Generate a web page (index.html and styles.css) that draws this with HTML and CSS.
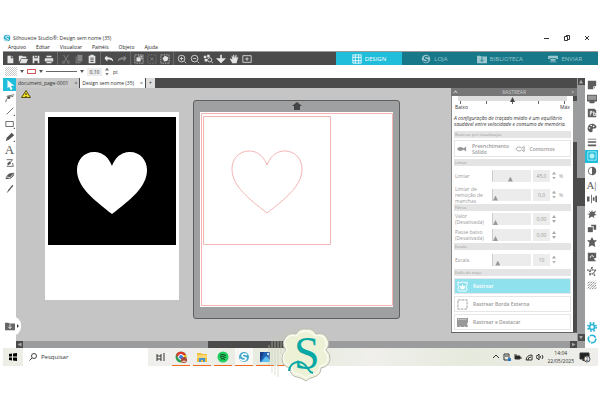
FILE: index.html
```html
<!DOCTYPE html>
<html lang="pt-br">
<head>
    <meta charset="UTF-8">
    <meta name="viewport" content="width=device-width, initial-scale=1.0">
    <title>Silhouette Studio</title>
    <link rel="stylesheet" href="styles.css">
</head>
<body>
    <svg class="sprite" aria-hidden="true">
        <symbol id="i-new" viewBox="0 0 12 12"><path d="M3 2h4v3h3v6H3zM8 2l2 2H8z"/></symbol>
        <symbol id="i-open" viewBox="0 0 12 12"><path d="M1 10V2h4l1 1h4v2H4z"/><path d="M4 6h8l-2 5H2z"/></symbol>
        <symbol id="i-save" viewBox="0 0 12 12"><path d="M2 2h2v3h4V2h2v9H8V8H4v3H2zM5 2h2v2H5zM4 6h4v1H4z"/></symbol>
        <symbol id="i-print" viewBox="0 0 12 12"><path d="M3 2h6v2H3zM1 5h10v4H9V8H3v1H1zM3 9h6v2H3z"/></symbol>
        <symbol id="i-cut" viewBox="0 0 12 12"><path d="M3 1l5 8M9 1L4 9" fill="none" stroke="currentColor"/><circle cx="3" cy="10" r="1.3" fill="none" stroke="currentColor"/><circle cx="9" cy="10" r="1.3" fill="none" stroke="currentColor"/></symbol>
        <symbol id="i-copy" viewBox="0 0 12 12"><path d="M4 1h6v8H4z"/><path d="M2 3h1v7h5v1H2z"/></symbol>
        <symbol id="i-paste" viewBox="0 0 12 12"><path d="M2 2h2V1h4v1h2v9H2z"/><path d="M4 5h4M4 7h4M4 9h4" stroke="#4a4b4a"/></symbol>
        <symbol id="i-undo" viewBox="0 0 12 12"><path d="M1 4l3-2v2c4 0 7 1 7 5-2-2-4-3-7-2v2L1 6z"/></symbol>
        <symbol id="i-redo" viewBox="0 0 12 12"><path d="M11 4L8 2v2c-4 0-7 1-7 5 2-2 4-3 7-2v2l3-3z"/></symbol>
        <symbol id="i-selall" viewBox="0 0 12 12"><path d="M1 1h10v10H1z" fill="none" stroke="currentColor" stroke-dasharray="1 1"/><path d="M5 2h5v5H9V3H5z"/><path d="M3 4h5v5H3z"/></symbol>
        <symbol id="i-desel" viewBox="0 0 12 12"><path d="M1 1h10v10H1z" fill="none" stroke="currentColor" stroke-dasharray="1 1"/><path d="M4 4l4 4M8 4L4 8" stroke="currentColor"/></symbol>
        <symbol id="i-selcol" viewBox="0 0 12 12"><path d="M1 1h10v10H1z" fill="none" stroke="currentColor" stroke-dasharray="1 1"/><path d="M6 2l4 2-1 4-4 1-2-4z"/></symbol>
        <symbol id="i-zin" viewBox="0 0 12 12"><circle cx="5.5" cy="5.5" r="4" fill="none" stroke="currentColor"/><path d="M9 9l2 2M3.500 5.500h4M5.500 3.500v4" stroke="currentColor"/></symbol>
        <symbol id="i-zout" viewBox="0 0 12 12"><circle cx="5.500" cy="5.500" r="4" fill="none" stroke="currentColor"/><path d="M9 9l2 2M3.500 5.500h4" stroke="currentColor"/></symbol>
        <symbol id="i-zsel" viewBox="0 0 12 12"><path d="M1 2h3v3H1zM5 1h3v3H5zM2 6h3v3H2z"/><circle cx="8" cy="7" r="2.500" fill="none" stroke="currentColor"/><path d="M10 9l2 2" stroke="currentColor"/></symbol>
        <symbol id="i-zfit" viewBox="0 0 12 12"><path d="M5 1h2v4h5L6 11 0 5h5z"/></symbol>
        <symbol id="i-hand" viewBox="0 0 12 12"><path d="M4 11L1 6l1-1 2 2-1-5h1l1 3V1h1l1 4 1-4h1v4l2-2v1L9 11z"/></symbol>
        <symbol id="i-page" viewBox="0 0 12 12"><path d="M1 2h10v8H1zM6 4v4M4 6h4" fill="none" stroke="currentColor"/></symbol>
        <symbol id="i-grid" viewBox="0 0 12 12"><path d="M1 1h10v10H1zM1 4h10M1 8h10M4 1v10M8 1v10" fill="none" stroke="currentColor"/></symbol>
        <symbol id="i-sil" viewBox="0 0 12 12"><circle cx="6" cy="6" r="5"/><path d="M9 4C7 2 4 3 4 5s5 1 4 3-4 2-6 0" fill="none" stroke="var(--hole, #17788a)" stroke-width="1.500"/></symbol>
        <symbol id="i-lib" viewBox="0 0 12 12"><path d="M0 2h4l1 1h7v8H0z"/><path d="M6 4v5M4 7l2 2 2-2" fill="none" stroke="var(--hole, #17788a)"/></symbol>
        <symbol id="i-send" viewBox="0 0 12 12"><path d="M0 3l1-1h10l1 1v3h-2V5H2v1H0zM3 6h6v2H3zM2 9h8v1H2z"/></symbol>
        <symbol id="i-arrow" viewBox="0 0 12 12"><path d="M3 0l8 7H7l2 4-2 1-2-4-2 2z"/></symbol>
        <symbol id="i-node" viewBox="0 0 12 12"><path d="M1 11c0-5 3-6 9-7M2 4l9-2" fill="none" stroke="currentColor"/><path d="M3 4h3v3H3z"/></symbol>
        <symbol id="i-line" viewBox="0 0 12 12"><path d="M2 10l8-8" stroke="currentColor"/><path d="M12 10v2h-2z"/></symbol>
        <symbol id="i-rect" viewBox="0 0 12 12"><path d="M1 3h9v6H1z" fill="none" stroke="currentColor"/><path d="M12 10v2h-2z"/></symbol>
        <symbol id="i-pen" viewBox="0 0 12 12"><path d="M1 11l1-4 6-6 3 3-6 5z"/><path d="M12 10v2h-2z"/></symbol>
        <symbol id="i-sketch" viewBox="0 0 12 12"><path d="M2 2h7M2 10h8L9 6M4 8l5-6" fill="none" stroke="currentColor"/><path d="M3 6l3-2 1 3-4 2z"/></symbol>
        <symbol id="i-eraser" viewBox="0 0 12 12"><path d="M5 3l6-1v3L7 9l-6 1V7z"/><path d="M1 7l5 1 5-5" fill="none" stroke="#fff"/></symbol>
        <symbol id="i-knife" viewBox="0 0 12 12"><path d="M2 11l2-4 5-6 1 1-5 6z"/></symbol>
        <symbol id="i-note" viewBox="0 0 12 12"><path d="M1 1h10v6L8 11H1z"/><path d="M8 11V8h3" fill="none" stroke="#fff"/></symbol>
        <symbol id="i-mat" viewBox="0 0 12 12"><path d="M0 1h12v8H9v2H3V9H0z"/><path d="M1 2h10v5H1z" fill="#999"/></symbol>
        <symbol id="i-pix" viewBox="0 0 12 12"><path d="M1 1h8l2 2v8H1z"/><path d="M4 9V4h2v2H4M8 4v5h2V6H8" fill="none" stroke="#fff"/></symbol>
        <symbol id="i-palette" viewBox="0 0 12 12"><path d="M6 1c4 0 6 3 5 5-1 1-3 0-4 1s1 4-2 4C2 11 0 8 1 5s3-4 5-4z"/><g fill="#fff"><circle cx="3" cy="6" r="1"/><circle cx="5" cy="3" r="1"/><circle cx="8" cy="4" r="1"/></g></symbol>
        <symbol id="i-lines" viewBox="0 0 12 12"><path d="M1 2h10v1H1zM1 5h10v2H1zM1 9h10v2H1z"/></symbol>
        <symbol id="i-trace" viewBox="0 0 12 12"><path d="M1 1h10v10H1z" fill="none" stroke="currentColor"/><circle cx="6" cy="6" r="3"/></symbol>
        <symbol id="i-contrast" viewBox="0 0 12 12"><circle cx="6" cy="6" r="4.500" fill="none" stroke="currentColor"/><path d="M6 1a5 5 0 0 1 0 10z"/></symbol>
        <symbol id="i-align" viewBox="0 0 12 12"><path d="M0 3h3v6H0zM5 1h1v10H5zM7 4h2v4H7zM10 2h2v8h-2z"/></symbol>
        <symbol id="i-burst" viewBox="0 0 12 12"><path d="M2 2l3 2 1-3 1 3 4-2-2 4 3 1-4 1 1 3-3-2-4 2 1-4-3-1 4-1z"/></symbol>
        <symbol id="i-rep" viewBox="0 0 12 12"><path d="M1 5h6v6H1z"/><path d="M5 2h6v6H8V4H5z"/></symbol>
        <symbol id="i-star" viewBox="0 0 12 12"><path d="M6 0l2 4 4 0-3 3 1 5-4-2-4 2 1-5-3-3h4z"/></symbol>
        <symbol id="i-nest" viewBox="0 0 12 12"><path d="M1 1h10v6L8 8l3 3H1z"/><path d="M4 7a2 2 0 1 1 4-1" fill="none" stroke="#fff"/></symbol>
        <symbol id="i-dotstar" viewBox="0 0 12 12"><path d="M6 1l1 4h4L8 7l1 4-3-2-3 2 1-4-3-2h4z" fill="none" stroke="currentColor" stroke-width="1.500" stroke-dasharray="2 1"/></symbol>
        <symbol id="i-hatch" viewBox="0 0 12 12"><path d="M1 4l3-3M1 7l6-6M1 10l9-9M3 11l8-8M6 11l5-5M9 11l2-2" stroke="currentColor" stroke-dasharray="3 1"/></symbol>
        <symbol id="i-gear" viewBox="0 0 12 12"><circle cx="6" cy="6" r="3" fill="none" stroke="currentColor" stroke-width="2"/><circle cx="6" cy="6" r="5" fill="none" stroke="currentColor" stroke-width="2" stroke-dasharray="2 2"/></symbol>
        <symbol id="i-sync" viewBox="0 0 12 12"><circle cx="6" cy="6" r="4.500" fill="none" stroke="currentColor" stroke-width="2" stroke-dasharray="8 1"/></symbol>
        <symbol id="i-fish" viewBox="0 0 12 12"><path d="M0 6c2-3 5-3 8-1l3-2v6L8 7c-3 2-6 2-8-1z"/></symbol>
        <symbol id="i-fishline" viewBox="0 0 12 12"><path d="M1 6c2-3 5-3 7-1l3-2v6L8 7c-2 2-5 2-7-1z" fill="none" stroke="currentColor"/></symbol>
        <symbol id="i-badge" viewBox="0 0 12 12"><path d="M1 1l2 1 3-1 3 1 2-1v3l-1 2 1 3-1 2H2L1 9l1-3-1-2z" fill="none" stroke="currentColor" stroke-width="1"/><path d="M3 5l2 1 1-3 1 3 2-1-1 4H4z"/></symbol>
        <symbol id="i-dashbox" viewBox="0 0 12 12"><path d="M1 1h10v10H1z" fill="none" stroke="currentColor" stroke-dasharray="3 1"/></symbol>
        <symbol id="i-detach" viewBox="0 0 12 12"><path d="M0 1h12v5l-1 1 1 4H9v-1H8v1H4v-1H3v1H0z"/><path d="M1 2.500h10" stroke="#fff" stroke-dasharray="1 1"/></symbol>
    </svg>

    <div class="app">
        <header class="titlebar">
            <svg class="icon title-logo"><use href="#i-sil"/></svg>
            <span class="title-text">Silhouette Studio®: Design sem nome (35)</span>
            <div class="window-buttons">
                <button aria-label="Minimizar"><svg viewBox="0 0 6 6"><path d="M0 3.500h5"/></svg></button>
                <button aria-label="Restaurar"><svg viewBox="0 0 6 6"><path d="M.5 1.500h3v4h-3zM2 .5h3.500v4H4"/></svg></button>
                <button aria-label="Fechar"><svg viewBox="0 0 6 6"><path d="M1 1l4 4M5 1L1 5"/></svg></button>
            </div>
        </header>

        <nav class="menubar">
            <button>Arquivo</button>
            <button>Editar</button>
            <button>Visualizar</button>
            <button>Painéis</button>
            <button>Objeto</button>
            <button>Ajuda</button>
        </nav>

        <div class="toolbar">
            <div class="tool-group">
                <button aria-label="Novo"><svg class="icon"><use href="#i-new"/></svg></button>
                <button aria-label="Abrir"><svg class="icon"><use href="#i-open"/></svg></button>
                <button aria-label="Salvar"><svg class="icon"><use href="#i-save"/></svg></button>
                <button aria-label="Imprimir"><svg class="icon"><use href="#i-print"/></svg></button>
            </div>
            <div class="tool-group">
                <button class="off" aria-label="Cortar"><svg class="icon"><use href="#i-cut"/></svg></button>
                <button class="off" aria-label="Copiar"><svg class="icon"><use href="#i-copy"/></svg></button>
                <button aria-label="Colar"><svg class="icon"><use href="#i-paste"/></svg></button>
            </div>
            <div class="tool-group">
                <button aria-label="Desfazer"><svg class="icon"><use href="#i-undo"/></svg></button>
                <button class="off" aria-label="Refazer"><svg class="icon"><use href="#i-redo"/></svg></button>
            </div>
            <div class="tool-group">
                <button aria-label="Selecionar tudo"><svg class="icon"><use href="#i-selall"/></svg></button>
                <button class="off" aria-label="Desmarcar"><svg class="icon"><use href="#i-desel"/></svg></button>
                <button aria-label="Selecionar por cor"><svg class="icon"><use href="#i-selcol"/></svg></button>
            </div>
            <div class="tool-group">
                <button aria-label="Aproximar"><svg class="icon"><use href="#i-zin"/></svg></button>
                <button aria-label="Afastar"><svg class="icon"><use href="#i-zout"/></svg></button>
                <button aria-label="Zoom na seleção"><svg class="icon"><use href="#i-zsel"/></svg></button>
                <button aria-label="Arrastar zoom"><svg class="icon"><use href="#i-zfit"/></svg></button>
                <button aria-label="Mover"><svg class="icon"><use href="#i-hand"/></svg></button>
                <button aria-label="Ajustar à página"><svg class="icon"><use href="#i-page"/></svg></button>
            </div>
            <nav class="modes">
                <a href="#design" class="active"><svg class="icon"><use href="#i-grid"/></svg>DESIGN</a>
                <a href="#loja"><svg class="icon"><use href="#i-sil"/></svg>LOJA</a>
                <a href="#biblioteca"><svg class="icon"><use href="#i-lib"/></svg>BIBLIOTECA</a>
                <a href="#enviar"><svg class="icon"><use href="#i-send"/></svg>ENVIAR</a>
            </nav>
        </div>

        <div class="options">
            <label class="drop"><span class="swatch pattern"></span><select aria-label="Preenchimento"></select></label>
            <label class="drop"><span class="swatch stroke"></span><select aria-label="Cor da linha"></select></label>
            <label class="drop"><span class="swatch rule"></span><select aria-label="Estilo da linha"></select></label>
            <input class="num" type="text" value="0,10" aria-label="Espessura">
            <span class="spin"><button aria-label="Mais"></button><button aria-label="Menos"></button></span>
            <span>pt</span>
        </div>

        <main class="main">
            <div class="tools">
                <button class="active" aria-label="Selecionar"><svg class="icon"><use href="#i-arrow"/></svg></button>
                <button aria-label="Editar pontos"><svg class="icon"><use href="#i-node"/></svg></button>
                <button aria-label="Linha"><svg class="icon"><use href="#i-line"/></svg></button>
                <button aria-label="Retângulo"><svg class="icon"><use href="#i-rect"/></svg></button>
                <button aria-label="Desenho"><svg class="icon"><use href="#i-pen"/></svg></button>
                <button class="letter" aria-label="Texto">A</button>
                <button aria-label="Esboço"><svg class="icon"><use href="#i-sketch"/></svg></button>
                <button aria-label="Borracha"><svg class="icon"><use href="#i-eraser"/></svg></button>
                <button aria-label="Faca"><svg class="icon"><use href="#i-knife"/></svg></button>
                <button class="library" aria-label="Biblioteca"><svg class="icon"><use href="#i-lib"/></svg><i></i></button>
            </div>

            <div class="workspace">
                <div class="tabs">
                    <button class="tab">document_page-0001<span>×</span></button>
                    <button class="tab current">Design sem nome (35)<span>×</span></button>
                    <button class="tab add" aria-label="Nova aba">+</button>
                </div>

                <div class="stage">
                    <svg class="warning" viewBox="0 0 10 8"><path d="M5 .5L9.500 7.500H.5z" fill="#f4e21c" stroke="#55501a"/><path d="M5 3v2M5 6v1" stroke="#222"/></svg>
                    <div class="picture">
                        <svg viewBox="0 0 128 128"><path fill="#000" d="M0 0h128v128H0z"/><path fill="#fff" d="M64 49C59 36 50 35 46 35C36 35 29 43 29 53C29 70 46 83 64 97C82 83 99 70 99 53C99 43 92 35 82 35C78 35 69 36 64 49z"/></svg>
                    </div>
                    <div class="mat">
                        <svg class="mat-arrow" viewBox="0 0 10 8"><path d="M5 0l5 4H8v4H2V4H0z"/></svg>
                        <svg class="page" viewBox="0 0 193 195">
                            <path d="M1.500 1.500h191v192h-191z"/>
                            <path d="M3.500 4.500h127v128h-127z"/>
                            <path d="M67 53C62 40 53 39 49 39C39 39 32 47 32 57C32 74 49 87 67 101C85 87 102 74 102 57C102 47 95 39 85 39C81 39 72 40 67 53z"/>
                        </svg>
                    </div>

                    <aside class="panel">
                        <header><span class="chevron"></span><span>RASTREAR</span><button aria-label="Fechar">×</button></header>
                        <div class="panel-view">
                            <div class="panel-body">
                                <div class="quality">
                                    <input type="range" min="0" max="4" value="2" aria-label="Qualidade do traçado">
                                    <div class="ticks"><i></i><i></i><i></i><i></i><i></i></div>
                                    <div class="ends"><span>Baixo</span><span>Máx</span></div>
                                    <p>A configuração de traçado médio é um equilíbrio saudável entre velocidade e consumo de memória.</p>
                                </div>

                                <h2>Rastrear pré-visualização</h2>
                                <div class="preview">
                                    <button><svg class="icon"><use href="#i-fish"/></svg>Preenchimento Sólido</button>
                                    <button><svg class="icon"><use href="#i-fishline"/></svg>Contornos</button>
                                </div>

                                <h2>Limiar</h2>
                                <div class="fields">
                                    <div class="field">
                                        <label for="limiar">Limiar</label>
                                        <input type="range" id="limiar" value="45">
                                        <input class="num" type="text" value="45,0" aria-label="Limiar, valor">
                                        <span class="spin"><button aria-label="Mais"></button><button aria-label="Menos"></button></span>%
                                    </div>
                                    <div class="field">
                                        <label for="manchas">Limiar de remoção de manchas</label>
                                        <input type="range" id="manchas" value="0">
                                        <input class="num" type="text" value="0,0" aria-label="Manchas, valor">
                                        <span class="spin"><button aria-label="Mais"></button><button aria-label="Menos"></button></span>%
                                    </div>
                                </div>

                                <h2>Filtros</h2>
                                <div class="fields tight">
                                    <div class="field">
                                        <label for="valor">Valor (Desativada)</label>
                                        <input type="range" id="valor" value="0">
                                        <input class="num" type="text" value="0,00" aria-label="Passe alto, valor">
                                        <span class="spin"><button aria-label="Mais"></button><button aria-label="Menos"></button></span>
                                    </div>
                                    <div class="field">
                                        <label for="passe">Passe baixo (Desativada)</label>
                                        <input type="range" id="passe" value="0">
                                        <input class="num" type="text" value="0,00" aria-label="Passe baixo, valor">
                                        <span class="spin"><button aria-label="Mais"></button><button aria-label="Menos"></button></span>
                                    </div>
                                </div>

                                <h2>Escala</h2>
                                <div class="fields">
                                    <div class="field">
                                        <label for="escala">Escala</label>
                                        <input type="range" id="escala" value="7">
                                        <input class="num" type="text" value="10" aria-label="Escala, valor">
                                        <span class="spin"><button aria-label="Mais"></button><button aria-label="Menos"></button></span>
                                    </div>
                                </div>

                                <h2>Estilo de traço</h2>
                                <div class="styles">
                                    <button class="active"><svg class="icon"><use href="#i-badge"/></svg>Rastrear</button>
                                    <button><svg class="icon"><use href="#i-dashbox"/></svg>Rastrear Borda Externa</button>
                                    <button><svg class="icon"><use href="#i-detach"/></svg>Rastrear e Destacar</button>
                                </div>
                            </div>
                            <div class="panel-scroll"><i class="up"></i><b></b><i class="down"></i></div>
                        </div>
                    </aside>
                </div>

                <div class="vscroll"><i class="up"></i><b></b><i class="down"></i></div>
                <div class="hscroll"><i class="left"></i><b></b><i class="right"></i></div>
            </div>

            <div class="panels">
                <div class="panel-icons">
                    <button aria-label="Página"><svg class="icon"><use href="#i-note"/></svg></button>
                    <button aria-label="Base"><svg class="icon"><use href="#i-mat"/></svg></button>
                    <button aria-label="PixScan"><svg class="icon"><use href="#i-pix"/></svg></button>
                    <button aria-label="Cores"><svg class="icon"><use href="#i-palette"/></svg></button>
                    <button aria-label="Linhas"><svg class="icon"><use href="#i-lines"/></svg></button>
                    <button class="active" aria-label="Rastrear"><svg class="icon"><use href="#i-trace"/></svg></button>
                    <button aria-label="Imagem"><svg class="icon"><use href="#i-contrast"/></svg></button>
                    <button class="letter" aria-label="Estilo de texto">A|</button>
                    <button aria-label="Alinhar"><svg class="icon"><use href="#i-align"/></svg></button>
                    <button aria-label="Transformar"><svg class="icon"><use href="#i-burst"/></svg></button>
                    <button aria-label="Replicar"><svg class="icon"><use href="#i-rep"/></svg></button>
                    <button aria-label="Modificar"><svg class="icon"><use href="#i-star"/></svg></button>
                    <button aria-label="Aninhar"><svg class="icon"><use href="#i-nest"/></svg></button>
                    <button aria-label="Strass"><svg class="icon"><use href="#i-dotstar"/></svg></button>
                    <button aria-label="Esboço"><svg class="icon"><use href="#i-hatch"/></svg></button>
                </div>
                <div class="panel-icons blue">
                    <button aria-label="Preferências"><svg class="icon"><use href="#i-gear"/></svg></button>
                    <button aria-label="Atualizar"><svg class="icon"><use href="#i-sync"/></svg></button>
                </div>
            </div>
        </main>

        <footer class="taskbar">
            <button class="start" aria-label="Iniciar"><svg viewBox="0 0 8 8"><path d="M0 1l3-.5v3H0zM4 .5L8 0v3.500H4zM0 4.500h3v3L0 7zM4 4.500h4V8l-4-.5z"/></svg></button>
            <label class="search"><svg viewBox="0 0 8 8"><circle cx="5" cy="3" r="2.500"/><path d="M3 5L.5 7.500"/></svg><input type="text" placeholder="Pesquisar" aria-label="Pesquisar"></label>
            <div class="apps">
                <button class="view" aria-label="Visão de tarefas"><svg viewBox="0 0 12 12"><path d="M3 3v2h4V3M3 10V8h4v2M3 5v3M7 5v3M10 2v8" fill="none" stroke="#333"/></svg></button>
                <button aria-label="Chrome"><svg viewBox="0 0 12 12"><circle cx="6" cy="6" r="5.500" fill="#34a04b"/><path d="M1 4a5.500 5.500 0 0 1 10 0H6L4 7z" fill="#e0392b"/><path d="M11 4a5.500 5.500 0 0 1-5 7.500L8 6 7 4z" fill="#f5c11e"/><circle cx="6" cy="6" r="2.500" fill="#3b7de0" stroke="#fff"/><circle cx="9" cy="9" r="3" fill="#a5483f"/><path d="M7 11c0-2 4-2 4 0z" fill="#e9c2ae"/></svg></button>
                <button aria-label="Arquivos"><svg viewBox="0 0 12 12"><path d="M1 2h4l1 1h5v8H1z" fill="#f3bd3c"/><path d="M1 4h10v3H1z" fill="#fbd875"/><path d="M3 7h6v4H7V9H5v2H3z" fill="#4794cf"/></svg></button>
                <button aria-label="Spotify"><svg viewBox="0 0 12 12"><circle cx="6" cy="6" r="5.500" fill="#1fce5d"/><path d="M3 4q3-1 6 .5M3 6q3-1 5.500.5M4 8q2-1 4 .5" fill="none" stroke="#143c20"/></svg></button>
                <button class="running" aria-label="Silhouette Studio"><svg class="sil" viewBox="0 0 12 12"><use href="#i-sil"/></svg></button>
                <button aria-label="Fotos"><svg viewBox="0 0 12 12"><path d="M1 1h10v10H1z" fill="#1c63b7"/><path d="M2 11l5-6 4 4v2z" fill="#5cc1f0"/><path d="M1 1h4L2 9H1z" fill="#163f86"/><circle cx="9" cy="3" r="1" fill="#fff"/></svg></button>
                <button aria-label="Outro aplicativo"></button>
            </div>
            <div class="tray">
                <svg viewBox="0 0 8 8"><path d="M1 5l3-3 3 3"/></svg>
                <svg viewBox="0 0 8 8"><path d="M1 1h5v6H1zM2 3h3"/><path d="M5 5h3v3H5z" fill="#2a7cc8" stroke="none"/></svg>
                <svg viewBox="0 0 8 8"><path d="M1 3h5v3H1z" fill="#222"/><path d="M7 4v2M0 2h3"/></svg>
                <svg viewBox="0 0 8 8"><path d="M1 7a6 6 0 0 1 6-5v5zM3 7a3 3 0 0 1 3-3"/></svg>
                <svg viewBox="0 0 8 8"><path d="M0 3h1l2-2v6L1 5H0zM4 3q1 1 0 2M6 2q2 2 0 4"/></svg>
                <time>14:04<br>22/05/2025</time>
                <svg class="notes" viewBox="0 0 12 12"><path d="M1 2h9v6H6L4 10V8H1z" fill="#222"/><circle cx="8" cy="8" r="3" fill="#eee" stroke="#555"/><text x="6.500" y="10">2</text></svg>
            </div>

            <svg class="brand" viewBox="0 0 64 60">
                <path class="stripes" d="M1 20v20M4 14v34M7 12v38M10 10v42M13 9v20M16 7v18M19 4v14M22 2v10M25 3v6"/>
                <path class="flower" d="M38 4q7-1 10 5q8-2 11 4q4 6-1 12q5 4 4 10q-2 7-9 8q0 7-7 9q-5 1-8 4q-4-3-9-4q-7-1-7-9q-8-2-8-9q0-5 4-9q-5-6-1-12q4-6 11-4q3-6 10-5z"/>
                <path class="flower-line" d="M38 6q5 0 9 5q7-2 10 3q3 6-1 11q4 5 4 9q-2 6-8 7q-1 7-7 8q-5 1-7 4q-4-3-8-4q-6-1-7-8q-7-1-8-8q0-4 4-8q-4-6-1-11q4-5 10-3q4-5 10-5z"/>
                <text x="26" y="44">S</text>
                <path class="swash" d="M21 46c1-9 10-11 15-7c5 4 4 8 9 9"/>
            </svg>
        </footer>
    </div>
</body>
</html>
```

FILE: styles.css
```css
* {
    box-sizing: border-box;
}

body {
    margin: 0;
    padding: 32px 3px;
    background: white;
    color: #333;
    font-family: "Open Sans", "Noto Sans", sans-serif;
    font-size: 5px;
    line-height: 6px;
}

button, input, select {
    margin: 0;
    padding: 0;
    border: none;
    background: none;
    color: inherit;
    font: inherit;
}

button {
    display: flex;
    align-items: center;
    justify-content: center;
}

svg {
    display: block;
    flex: none;
}

.sprite {
    position: absolute;
    width: 0;
    height: 0;
}

.icon {
    width: 10px;
    height: 10px;
    fill: currentColor;
}

/* title and menu */
.titlebar {
    display: flex;
    align-items: center;
    gap: 2px;
    height: 11px;
}

.title-logo {
    width: 8px;
    height: 8px;
    color: #27a9c7;
    --hole: #fff;
}

.window-buttons {
    display: flex;
    gap: 14px;
    margin-left: auto;
    padding-right: 8px;
}

.window-buttons svg {
    width: 6px;
    height: 6px;
    fill: none;
    stroke: #333;
}

.menubar {
    display: flex;
    gap: 10px;
    height: 8px;
    padding-left: 5px;
    color: #222;
}

/* toolbar */
.toolbar {
    display: flex;
    height: 14px;
    border-top: 1px solid #999;
    background: #4a4b4a;
    color: #e4e4e4;
}

.tool-group {
    display: flex;
    align-items: center;
}

.tool-group + .tool-group {
    margin-left: 2px;
    padding-left: 1px;
    border-left: 1px solid #6a6b6a;
}

.tool-group button {
    width: 13px;
    height: 13px;
}

.tool-group .off {
    color: #858685;
}

.modes {
    display: flex;
    flex: 0 0 44%;
    margin-left: auto;
}

.modes a {
    display: flex;
    flex: 1;
    align-items: center;
    justify-content: center;
    gap: 3px;
    background: #17788a;
    color: #9cc6cd;
    font-size: 6px;
    text-decoration: none;
}

.modes .active {
    background: #20bedb;
    color: white;
}

/* line options */
.options {
    display: flex;
    align-items: center;
    gap: 3px;
    height: 13px;
    padding-left: 2px;
}

.drop {
    display: flex;
    align-items: center;
    gap: 3px;
}

.drop select {
    width: 4px;
    height: 3px;
    appearance: none;
    background: #555;
    clip-path: polygon(0 0, 100% 0, 50% 100%);
}

.swatch {
    width: 12px;
    height: 9px;
}

.pattern {
    background: repeating-conic-gradient(#ccc 0 25%, #fff 0 50%) 0 0 / 2px 2px;
}

.stroke {
    width: 9px;
    height: 5px;
    border: 1px solid #cf5a5a;
}

.rule {
    width: 31px;
    height: 1px;
    background: #666;
}

.num {
    width: 15px;
    height: 8px;
    background: #ededed;
    text-align: center;
}

.spin {
    display: flex;
    flex-direction: column;
    gap: 2px;
    width: 5px;
}

.spin button {
    width: 4px;
    height: 3px;
    background: #777;
    clip-path: polygon(50% 0, 100% 100%, 0 100%);
}

.spin button + button {
    clip-path: polygon(0 0, 100% 0, 50% 100%);
}

/* main area */
.main {
    display: flex;
}

.tools {
    display: flex;
    flex-direction: column;
    width: 13px;
    color: #555;
}

.tools button {
    width: 13px;
    height: 13px;
}

.tools .active {
    background: #20bedb;
    color: white;
}

.tools .letter {
    font: 13px "Liberation Serif", serif;
}

.tools .library {
    z-index: 1;
    gap: 2px;
    width: 18px;
    height: 20px;
    margin: auto 0 12px;
    border-radius: 0 9px 9px 0;
    background: white;
    color: #666;
    --hole: #fff;
}

.library i {
    width: 2px;
    height: 4px;
    background: #444;
    clip-path: polygon(0 0, 100% 50%, 0 100%);
}

.workspace {
    display: grid;
    flex: 1;
    grid-template-columns: 1fr 8px;
    grid-template-rows: 10px auto 7px;
    min-width: 0;
    background: #9b9c9d;
}

.tabs {
    display: flex;
    gap: 1px;
    background: #4a4b4a;
}

.tab {
    gap: 6px;
    padding: 0 2px;
    background: #c9c9c9;
}

.tab.current {
    background: white;
}

.tab.add {
    padding: 0 3px;
    background: #ddd;
}

.stage {
    position: relative;
    display: flex;
    align-items: flex-start;
    padding-left: 29px;
    background: #c5c5c5;
    overflow: hidden;
}

.warning {
    position: absolute;
    top: 2px;
    left: 5px;
    width: 10px;
    height: 8px;
}

.picture {
    flex: none;
    margin-top: 24px;
    padding: 5px 3px 55px;
    background: white;
}

.picture svg {
    width: 128px;
    height: 128px;
}

.mat {
    flex: none;
    margin: 12px 0 0 14px;
    padding: 1px 6px 11px;
    border: 1px solid #5d5e60;
    border-radius: 3px;
    background: #9fa0a2;
}

.mat-arrow {
    width: 10px;
    height: 8px;
    margin: 0 auto 2px;
    fill: #444;
}

.page {
    width: 193px;
    height: 195px;
    background: white;
    fill: none;
    stroke: #f4b4b4;
}

/* trace panel */
.panel {
    width: 126px;
    margin: 0 0 8px auto;
    border-bottom: 1px solid #666;
    background: white;
}

.panel header {
    display: flex;
    align-items: center;
    justify-content: space-between;
    height: 8px;
    padding: 0 3px;
    background: #777;
    color: #ccc;
}

.chevron {
    width: 3px;
    height: 3px;
    border: solid #ccc;
    border-width: 1px 0 0 1px;
    transform: rotate(45deg);
}

.panel-view {
    display: flex;
    color: #999;
}

.panel-body {
    flex: 1;
    padding: 0 2px;
    border-left: 1px solid #888;
}

.panel-body h2 {
    height: 7px;
    margin: 0;
    padding-left: 1px;
    background: #e4e4e4;
    font-size: 4px;
    font-weight: normal;
    line-height: 7px;
}

.quality {
    height: 35px;
    color: #333;
}

.ticks, .ends {
    display: flex;
    justify-content: space-between;
}

.ticks {
    height: 3px;
    padding: 0 6px;
}

.ticks i {
    width: 1px;
    background: #666;
}

.ends {
    height: 7px;
    padding: 0 1px;
}

.quality p {
    margin: 4px 0 0;
    font-style: italic;
}

.preview {
    display: grid;
    grid-template-columns: 1fr 1fr;
    height: 17px;
    margin: 2px 0;
    border: 1px solid #e6e6e6;
    font-weight: 600;
}

.preview button {
    justify-content: flex-start;
    gap: 5px;
    padding-left: 2px;
    text-align: left;
}

input[type="range"] {
    display: block;
    width: 39px;
    height: 12px;
    appearance: none;
    background: #ececec;
    border-left: 1px solid #ccc;
}

input[type="range"]::-webkit-slider-runnable-track {
    height: 100%;
}

input[type="range"]::-webkit-slider-thumb {
    width: 5px;
    height: 5px;
    margin-top: 7px;
    appearance: none;
    background: #999;
    clip-path: polygon(50% 0, 100% 100%, 0 100%);
}

.quality input[type="range"] {
    width: calc(100% - 8px);
    height: 5px;
    margin: 0 4px;
    border: none;
    background: #ddd;
}

.quality input[type="range"]::-webkit-slider-thumb {
    margin-top: 1px;
    background: #444;
}

.field {
    display: grid;
    grid-template-columns: 35px 39px 17px 5px auto;
    align-items: center;
    gap: 2px;
    height: 19px;
    padding-left: 1px;
}

.fields.tight .field {
    height: 16px;
}

.field .num {
    width: 17px;
    height: 12px;
}

.field .spin button {
    background: #aaa;
}

.styles {
    display: flex;
    flex-direction: column;
    gap: 2px;
    padding: 2px 0;
    font-weight: 600;
}

.styles button {
    justify-content: flex-start;
    gap: 5px;
    height: 16px;
    padding-left: 2px;
    border: 1px solid #e6e6e6;
}

.styles .icon {
    width: 11px;
    height: 11px;
}

.styles .active {
    background: #8fe1ee;
    color: white;
}

/* scroll bars */
.panel-scroll, .vscroll {
    display: flex;
    flex-direction: column;
    align-items: center;
    background: #9b9c9d;
}

.panel-scroll {
    width: 4px;
}

.panel-scroll b {
    flex: 1;
    width: 100%;
    margin-top: 41px;
    background: #4a4b4a;
}

.panel-scroll i {
    width: 4px;
    height: 5px;
    background: #4a4b4a;
}

.vscroll {
    grid-area: 1 / 2 / 3 / 3;
    width: 8px;
}

.vscroll b {
    width: 100%;
    height: 28px;
    margin: 93px 0 auto;
    background: #4a4b4a;
}

.hscroll {
    display: flex;
    grid-column: 1;
    background: #9b9c9d;
}

.hscroll b {
    width: 18%;
    margin: 0 auto 0 33%;
    background: #4a4b4a;
}

.vscroll i, .hscroll i {
    display: grid;
    place-items: center;
    width: 7px;
    height: 7px;
    background: #4a4b4a;
}

.vscroll i::before, .hscroll i::before {
    content: "";
    width: 4px;
    height: 4px;
    background: #aaa;
}

.up::before {
    clip-path: polygon(50% 0, 100% 100%, 0 100%);
}

.down::before {
    clip-path: polygon(0 0, 100% 0, 50% 100%);
}

.left::before {
    clip-path: polygon(100% 0, 100% 100%, 0 50%);
}

.right::before {
    clip-path: polygon(0 0, 100% 50%, 0 100%);
}

/* right column */
.panels {
    display: flex;
    flex-direction: column;
    width: 13px;
    color: #5c5d5c;
}

.panel-icons {
    display: flex;
    flex-direction: column;
    justify-content: space-between;
    height: 214px;
}

.panel-icons button {
    width: 13px;
    height: 13px;
}

.panel-icons .active {
    background: #20bedb;
    color: #b8eff8;
}

.panel-icons .letter {
    font: 11px "Liberation Serif", serif;
}

.panel-icons.blue {
    height: 24px;
    margin: auto 0 3px;
    color: #27b5d5;
}

/* taskbar */
.taskbar {
    position: relative;
    display: flex;
    height: 18px;
    background: linear-gradient(100deg, #eceee6, #f0efed 30%, #e5eadb 48%, #f0efec 62%, #e6eadd 78%, #efeeec);
}

.start {
    width: 20px;
}

.start svg, .search svg {
    width: 8px;
    height: 8px;
}

.search {
    display: flex;
    flex: 0 0 21%;
    align-items: center;
    gap: 4px;
    padding-left: 6px;
    background: white;
    font-size: 6px;
}

.search svg {
    fill: none;
    stroke: #444;
}

.search input {
    width: 80px;
}

.search input::placeholder {
    color: #333;
    opacity: 1;
}

.apps {
    display: flex;
    gap: 3px;
    padding-left: 3px;
}

.apps button {
    width: 18px;
    border-bottom: 1px solid #f26a1b;
}

.apps .view {
    border-color: transparent;
}

.apps .running {
    background: #f8f8f7;
}

.apps svg {
    width: 12px;
    height: 12px;
}

.apps .sil {
    fill: #45a9cb;
    --hole: #fff;
}

.tray {
    display: flex;
    align-items: center;
    gap: 3px;
    margin-left: auto;
    padding-right: 7px;
}

.tray svg {
    width: 8px;
    height: 8px;
    fill: none;
    stroke: #333;
}

.tray time {
    text-align: center;
    line-height: 8px;
}

.tray .notes {
    width: 12px;
    height: 12px;
    margin-left: 2px;
}

.notes text {
    fill: #222;
    stroke: none;
}

.brand {
    position: absolute;
    top: -23px;
    left: 44%;
    width: 64px;
    height: 60px;
    margin-left: 3px;
}

.stripes {
    stroke: #c9ccb4;
    opacity: 0.6;
}

.flower {
    fill: #f2f3dc;
    stroke: #b9b9b0;
}

.flower-line {
    fill: #edf1d6;
    stroke: #fff;
}

.brand text {
    fill: #08a9a5;
    font: 46px "Liberation Serif", serif;
}

.swash {
    fill: none;
    stroke: #08a9a5;
    stroke-width: 2;
}
```
